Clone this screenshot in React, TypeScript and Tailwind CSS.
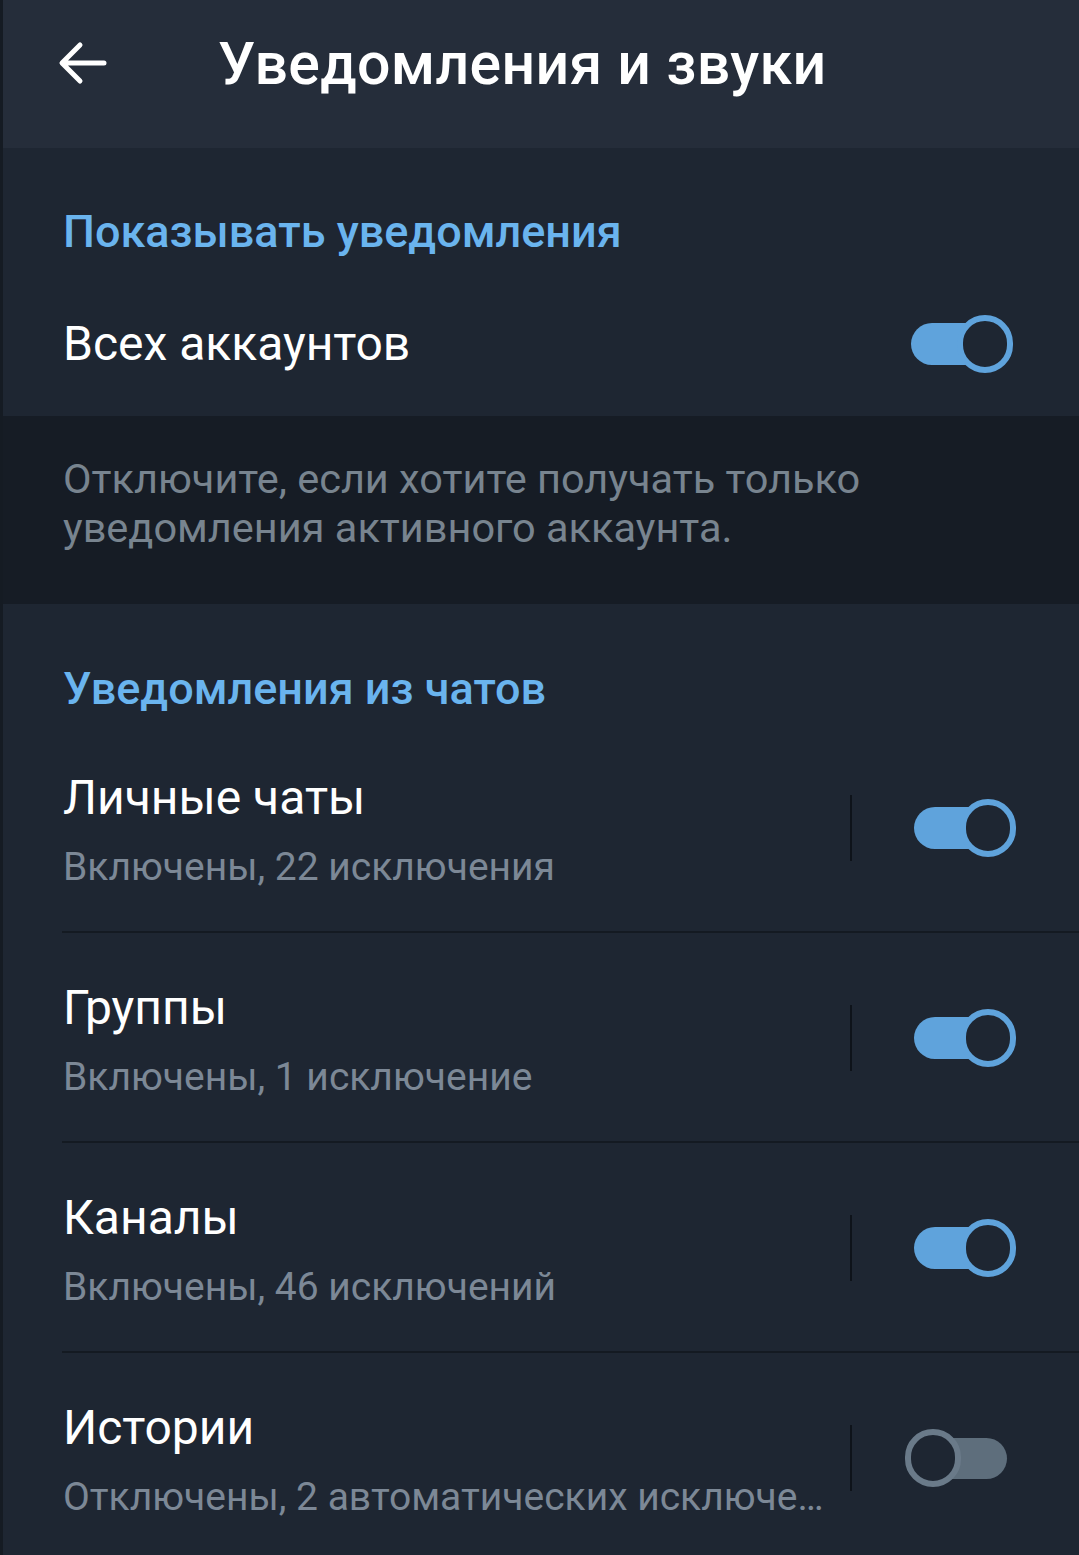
import React from "react";

function Toggle({ on }: { on: boolean }) {
  if (on) {
    return (
      <div className="relative w-[102px] h-[58px]">
        <div className="absolute left-0 top-[8px] w-[80px] h-[42px] rounded-full bg-[#5fa3dc]" />
        <div className="absolute right-0 top-0 w-[56px] h-[58px] rounded-full border-[6px] border-[#5fa3dc] bg-[#1e2632]" />
      </div>
    );
  }
  return (
    <div className="relative w-[102px] h-[58px]">
      <div className="absolute right-0 top-[9px] w-[80px] h-[41px] rounded-full bg-[#5e6e7c]" />
      <div className="absolute left-0 top-0 w-[56px] h-[58px] rounded-full border-[6px] border-[#6a7a89] bg-[#1e2632]" />
    </div>
  );
}

function Row({
  title,
  sub,
  on,
  divider,
}: {
  title: string;
  sub: string;
  on: boolean;
  divider: boolean;
}) {
  return (
    <div className="relative h-[210px] flex">
      <div className="w-[850px] pl-[63px] pr-[24px] pt-[47px] min-w-0">
        <div className="text-[48px] leading-[56px] text-white">{title}</div>
        <div className="text-[39px] leading-[46px] text-[#7c8896] mt-[18px] truncate">
          {sub}
        </div>
      </div>
      <div className="self-center w-[2px] h-[66px] bg-[#0e131a]" />
      <div className={on ? "self-center pl-[62px]" : "self-center pl-[53px]"}>
        <Toggle on={on} />
      </div>
      {divider && (
        <div className="absolute bottom-0 left-[62px] right-0 h-[2px] bg-[#141a22]" />
      )}
    </div>
  );
}

export default function App() {
  return (
    <div
      className="relative w-[1079px] h-[1555px] bg-[#1e2632] overflow-hidden"
      style={{ fontFamily: "Roboto, 'Noto Sans', sans-serif" }}
    >
      {/* Header */}
      <div className="h-[148px] bg-[#252d3a] flex items-center">
        <div className="w-[218px] pl-[58px] flex items-center -mt-[22px]">
          <svg width="50" height="44" viewBox="0 0 50 44" fill="none">
            <path
              d="M46 22H5M22 4L4 22l18 18"
              stroke="white"
              strokeWidth="5"
              strokeLinecap="round"
              strokeLinejoin="round"
            />
          </svg>
        </div>
        <div className="text-[59px] font-medium text-white leading-none -mt-[22px] tracking-[0.3px]">
          Уведомления и звуки
        </div>
      </div>

      {/* Section 1 */}
      <div className="h-[268px] bg-[#1e2632]">
        <div className="pl-[63px] pt-[59px] text-[45px] leading-[50px] font-medium text-[#6ab4ee]">
          Показывать уведомления
        </div>
        <div className="flex items-center justify-between pl-[63px] pr-[66px] mt-[58px] h-[58px]">
          <div className="text-[48px] leading-[56px] text-white">Всех аккаунтов</div>
          <Toggle on={true} />
        </div>
      </div>

      {/* Hint */}
      <div className="h-[188px] bg-[#161c25] pl-[63px] pt-[38px]">
        <div className="text-[41.5px] leading-[49px] text-[#78848f]">
          Отключите, если хотите получать только
          <br />
          уведомления активного аккаунта.
        </div>
      </div>

      {/* Section 2 */}
      <div>
        <div className="pl-[63px] pt-[60px] text-[45px] leading-[50px] font-medium text-[#6ab4ee]">
          Уведомления из чатов
        </div>
        <div className="mt-[9px]">
          <Row title="Личные чаты" sub="Включены, 22 исключения" on={true} divider={true} />
          <Row title="Группы" sub="Включены, 1 исключение" on={true} divider={true} />
          <Row title="Каналы" sub="Включены, 46 исключений" on={true} divider={true} />
          <Row
            title="Истории"
            sub="Отключены, 2 автоматических исключения"
            on={false}
            divider={false}
          />
        </div>
      </div>

      <div className="absolute left-0 top-0 bottom-0 w-[3px] bg-[#151b23]" />
    </div>
  );
}
